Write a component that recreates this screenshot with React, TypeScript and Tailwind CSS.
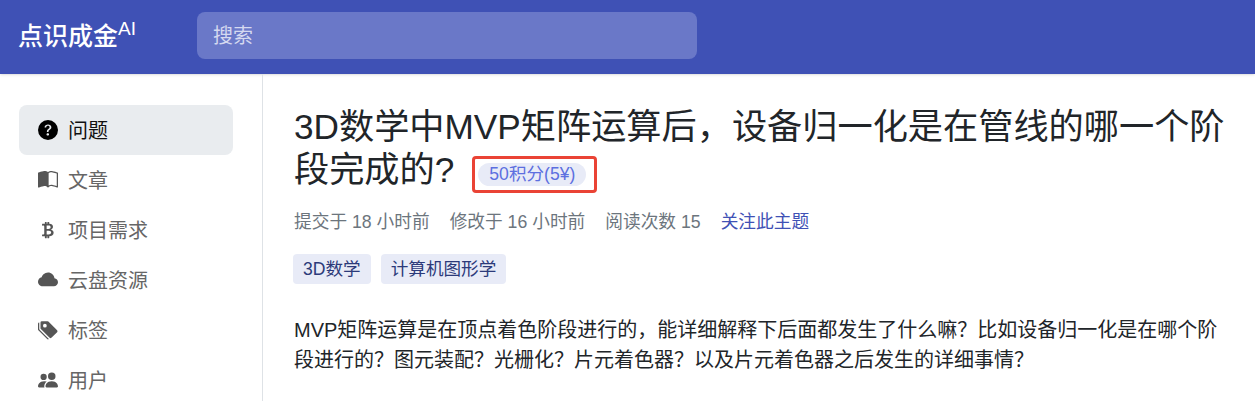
import React from "react";
import { BsQuestionCircleFill, BsBookHalf, BsCurrencyBitcoin, BsCloudFill, BsTagsFill, BsPeopleFill } from "react-icons/bs";

const navItems = [
  { label: "问题", icon: BsQuestionCircleFill, active: true },
  { label: "文章", icon: BsBookHalf },
  { label: "项目需求", icon: BsCurrencyBitcoin },
  { label: "云盘资源", icon: BsCloudFill },
  { label: "标签", icon: BsTagsFill },
  { label: "用户", icon: BsPeopleFill },
];

const App: React.FC = () => {
  return (
    <div className="h-[401px] overflow-hidden bg-white font-['Liberation_Sans','Noto_Sans_CJK_SC',sans-serif] text-[#212529]">
      <header className="flex h-[74px] items-center bg-[#3f51b5] shadow-sm">
        <div className="mb-[2px] ml-[18px] w-[179px] text-[25px] leading-none font-medium text-white">
          点识成金<sup className="text-[19px] font-normal">AI</sup>
        </div>
        <div className="mb-[3px] flex h-[47px] w-[500px] items-center rounded-lg bg-[#6a78c8] px-4 text-[20px] text-[#d5d9f0]">
          搜索
        </div>
      </header>
      <div className="flex">
        <aside className="h-[327px] w-[263px] shrink-0 border-r border-[#dee2e6] pt-[31px] pl-[19px]">
          <nav className="flex w-[214px] flex-col">
            {navItems.map((item) => (
              <div
                key={item.label}
                className={
                  item.active
                    ? "flex h-[50px] items-center gap-[10px] rounded-lg bg-[#e9ecef] px-[19px] text-[20px] text-[#111]"
                    : "flex h-[50px] items-center gap-[10px] rounded-lg px-[19px] text-[20px] text-[#666]"
                }
              >
                <span className={item.active ? "flex w-5 justify-center text-[20px] text-black" : "flex w-5 justify-center text-[20px] text-[#555]"}>
                  <item.icon />
                </span>
                <span className="relative top-px">{item.label}</span>
              </div>
            ))}
          </nav>
        </aside>
        <main className="min-w-0 flex-1 pt-[31px] pr-[28px] pl-[31px]">
          <h1 className="text-[35.2px] leading-[43px] font-normal text-[#212529]">
            3D数学中MVP矩阵运算后，设备归一化是在管线的哪一个阶段完成的?
            <span className="relative top-[2px] ml-[18px] inline-flex h-[37px] items-center rounded-sm border-[3px] border-[#ea4335] pr-2 pl-[3px] align-middle">
              <span className="rounded-full bg-[#e8ebf7] px-[11px] text-[17.6px] leading-[23px] text-[#5c6fe0]">50积分(5¥)</span>
            </span>
          </h1>
          <div className="mt-[18px] flex gap-5 text-[17.7px] leading-[26px] text-[#6c757d]">
            <span>提交于 18 小时前</span>
            <span>修改于 16 小时前</span>
            <span>阅读次数 15</span>
            <span className="text-[#3f51b5]">关注此主题</span>
          </div>
          <div className="mt-[19px] -ml-px flex gap-[10px] text-[17.6px] leading-[30px] text-[#2c3a7a]">
            <span className="rounded bg-[#e8ebf7] px-[10px]">3D数学</span>
            <span className="rounded bg-[#e8ebf7] px-[10px]">计算机图形学</span>
          </div>
          <p className="mt-[31px] text-[20px] leading-[30px] text-[#212529]">
            MVP矩阵运算是在顶点着色阶段进行的，能详细解释下后面都发生了什么嘛？比如设备归一化是在哪个阶段进行的？图元装配？光栅化？片元着色器？以及片元着色器之后发生的详细事情？
          </p>
        </main>
      </div>
    </div>
  );
};

export default App;
